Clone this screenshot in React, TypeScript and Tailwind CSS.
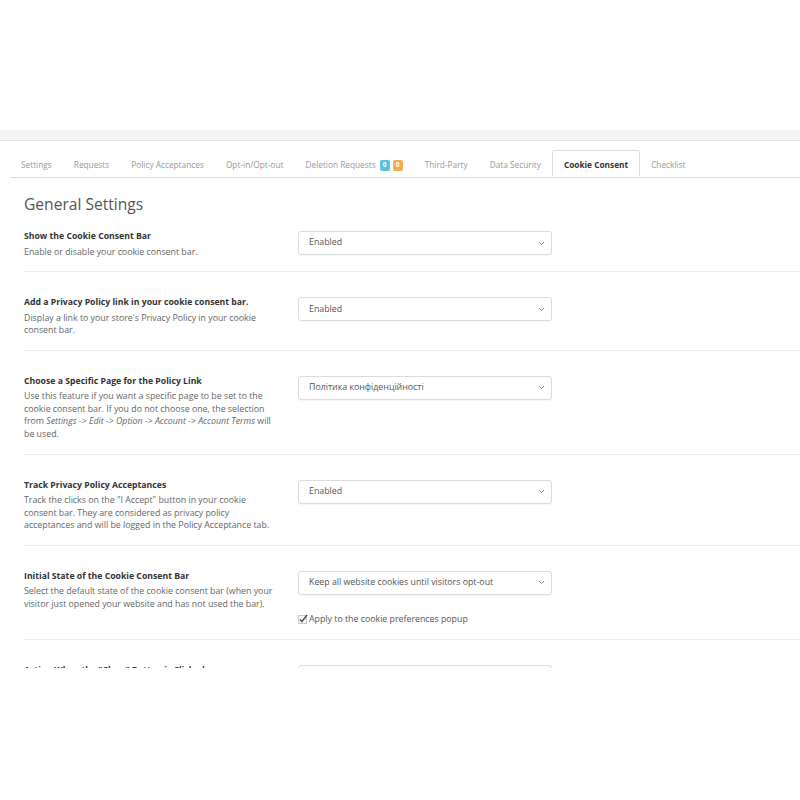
import React from "react";

const tabs = [
  { label: "Settings" },
  { label: "Requests" },
  { label: "Policy Acceptances" },
  { label: "Opt-in/Opt-out" },
  { label: "Deletion Requests", badges: true },
  { label: "Third-Party" },
  { label: "Data Security" },
  { label: "Cookie Consent", active: true },
  { label: "Checklist" },
];

type Row = {
  title: string;
  desc: React.ReactNode;
  value: string;
  checkbox?: string;
};

const rows: Row[] = [
  {
    title: "Show the Cookie Consent Bar",
    desc: "Enable or disable your cookie consent bar.",
    value: "Enabled",
  },
  {
    title: "Add a Privacy Policy link in your cookie consent bar.",
    desc: "Display a link to your store's Privacy Policy in your cookie consent bar.",
    value: "Enabled",
  },
  {
    title: "Choose a Specific Page for the Policy Link",
    desc: (
      <>
        Use this feature if you want a specific page to be set to the cookie consent bar. If you do
        not choose one, the selection from <i>Settings -&gt; Edit -&gt; Option -&gt; Account -&gt; Account Terms</i>{" "}
        will be used.
      </>
    ),
    value: "Політика конфіденційності",
  },
  {
    title: "Track Privacy Policy Acceptances",
    desc: 'Track the clicks on the "I Accept" button in your cookie consent bar. They are considered as privacy policy acceptances and will be logged in the Policy Acceptance tab.',
    value: "Enabled",
  },
  {
    title: "Initial State of the Cookie Consent Bar",
    desc: "Select the default state of the cookie consent bar (when your visitor just opened your website and has not used the bar).",
    value: "Keep all website cookies until visitors opt-out",
    checkbox: "Apply to the cookie preferences popup",
  },
  {
    title: 'Action When the "Close" Button is Clicked',
    desc: "Select what happens when the visitor closes the bar.",
    value: "Keep the current state",
  },
];

function Select({ value }: { value: string }) {
  return (
    <div className="w-[254px] h-[24px] border border-[#dcdcdc] rounded-[3px] bg-white flex items-center justify-between pl-[10px] pr-[6px] shadow-[0_1px_1px_rgba(0,0,0,0.04)]">
      <span className="text-[8.8px] text-[#555]">{value}</span>
      <svg width="7" height="5" viewBox="0 0 7 5" fill="none">
        <path d="M1 1l2.5 2.5L6 1" stroke="#888" strokeWidth="1" />
      </svg>
    </div>
  );
}

export default function App() {
  return (
    <div
      className="w-full h-[800px] bg-white"
      style={{ fontFamily: '"Open Sans", "Noto Sans", sans-serif' }}
    >
      <div className="h-[130px]" />
      <div className="h-[11px] bg-[#f5f5f5] border-b border-[#e3e3e3]" />

      <div className="h-[527px] overflow-hidden">
        {/* Tabs */}
        <div className="pl-[10px] pt-[9px]">
          <div className="flex border-b border-[#dddddd]">
            {tabs.map((t) => (
              <div
                key={t.label}
                className={
                  t.active
                    ? "h-[27px] pt-[3px] px-[11px] flex items-center border border-[#dddddd] border-b-white -mb-px bg-white rounded-t-[2px] text-[8.3px] font-bold text-[#333]"
                    : "h-[27px] pt-[3px] px-[11px] flex items-center text-[8.3px] text-[#999]"
                }
              >
                {t.label}
                {t.badges && (
                  <span className="flex gap-[3px] ml-[4px]">
                    <span className="w-[10px] h-[11px] rounded-[2px] bg-[#5bc0de] text-white text-[6.5px] font-bold flex items-center justify-center">
                      0
                    </span>
                    <span className="w-[10px] h-[11px] rounded-[2px] bg-[#f0ad4e] text-white text-[6.5px] font-bold flex items-center justify-center">
                      0
                    </span>
                  </span>
                )}
              </div>
            ))}
          </div>
        </div>

        {/* Content */}
        <div className="pl-[24px]">
          <h2 className="mt-[16px] text-[15.6px] leading-[20px] text-[#555] font-normal">General Settings</h2>

          {rows.map((r, i) => (
            <div
              key={r.title}
              className={
                (i === 0 ? "pt-[16px] " : "pt-[24px] ") +
                "pb-[13px] border-b border-[#eeeeee] flex items-start"
              }
            >
              <div className="w-[274px]">
                <div className="text-[8.7px] leading-[12.5px] font-bold text-[#333]">{r.title}</div>
                <div className="w-[252px] mt-[3px] text-[8.8px] leading-[12.6px] text-[#666]">{r.desc}</div>
              </div>
              <div className="pt-[1px]">
                <Select value={r.value} />
                {r.checkbox && (
                  <div className="mt-[18px] flex items-center gap-[1px] text-[8.8px] leading-[12.6px] text-[#555]">
                    <svg width="10" height="10" viewBox="0 0 10 10">
                      <rect x="0.5" y="1.5" width="8" height="8" fill="#f4f4f4" stroke="#c8c8c8" />
                      <path d="M2 5.5l2 2L9 1" stroke="#444" strokeWidth="1.3" fill="none" />
                    </svg>
                    <span>{r.checkbox}</span>
                  </div>
                )}
              </div>
            </div>
          ))}
        </div>
      </div>
    </div>
  );
}
